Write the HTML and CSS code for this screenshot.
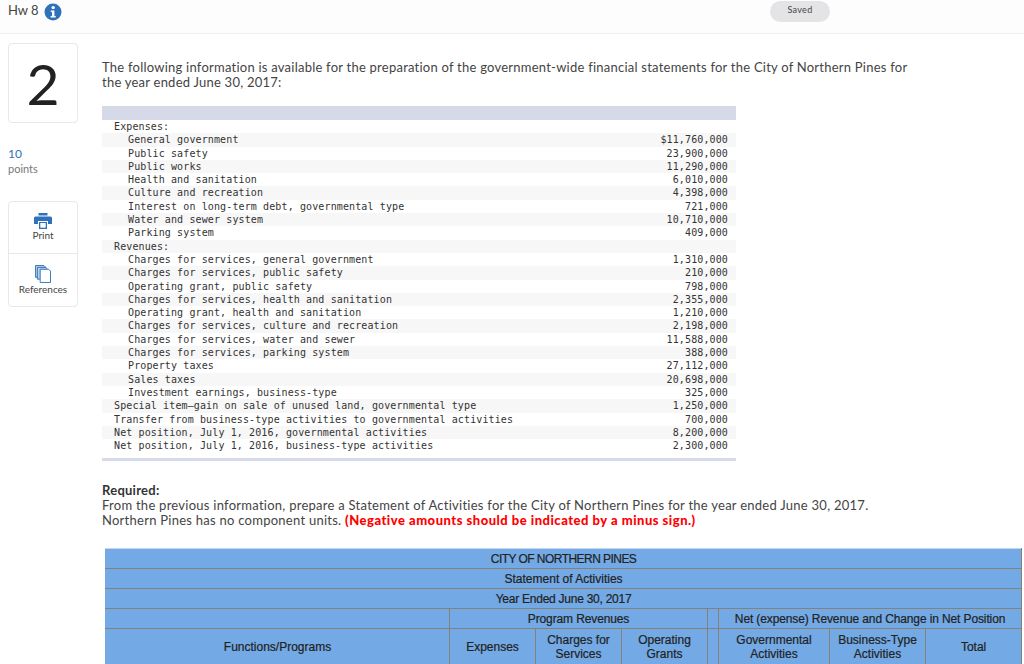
FILE: index.html
```
<!DOCTYPE html>
<html lang="en">
<head>
<meta charset="utf-8">
<title>Hw 8</title>
<link rel="stylesheet" href="styles.css">
</head>
<body>
<header class="topbar">
  <div class="title">
    <span>Hw 8</span>
    <svg class="info" width="18" height="18" viewBox="0 0 18 18"><circle cx="9" cy="9" r="8.5" fill="#2f72bb"/><circle cx="9.2" cy="4.6" r="1.7" fill="#fff"/><path d="M6.800 7.400h3.600v5.600h1.300v1.600H6.600V13h1.400V9H6.800z" fill="#fff"/></svg>
  </div>
  <div class="saved">Saved</div>
</header>
<div class="page">
  <aside class="side">
    <div class="qnum">2</div>
    <div class="points"><div class="pnum">10</div><div class="plabel">points</div></div>
    <div class="tools">
      <div class="tool print">
        <svg width="18" height="16" viewBox="0 0 18 16"><path d="M4.500 0h9v2.500h-9z" fill="#2f72bb"/><path d="M1.500 3.500h15A1.500 1.500 0 0 1 18 5v6h-4V8H4v3H0V5a1.500 1.500 0 0 1 1.500-1.500z" fill="#2f72bb"/><path d="M5 9h8v7H5z" fill="#2f72bb"/><path d="M6.300 10h5.400v4.700H6.300z" fill="#fff"/></svg>
        <span>Print</span>
      </div>
      <div class="tool refs">
        <svg width="16" height="18" viewBox="0 0 17 19"><path d="M.5.500h9l1.500 1.500v11H.5z" fill="#b9cfe6" stroke="#2f72bb"/><path d="M2.500 2.500h9l1.500 1.500v11H2.500z" fill="#b9cfe6" stroke="#2f72bb"/><path d="M5.500 4.500h9l2 2v12h-11z" fill="#fff" stroke="#2f72bb"/></svg>
        <span>References</span>
      </div>
    </div>
  </aside>
  <main class="content">
    <p class="intro">The following information is available for the preparation of the government-wide financial statements for the City of Northern Pines for the year ended June 30, 2017:</p>
    <div class="exhibit">
      <div class="row"><span class="l0">Expenses:</span><span></span></div>
      <div class="row alt"><span class="l1">General government</span><span>$11,760,000</span></div>
      <div class="row"><span class="l1">Public safety</span><span>23,900,000</span></div>
      <div class="row alt"><span class="l1">Public works</span><span>11,290,000</span></div>
      <div class="row"><span class="l1">Health and sanitation</span><span>6,010,000</span></div>
      <div class="row alt"><span class="l1">Culture and recreation</span><span>4,398,000</span></div>
      <div class="row"><span class="l1">Interest on long-term debt, governmental type</span><span>721,000</span></div>
      <div class="row alt"><span class="l1">Water and sewer system</span><span>10,710,000</span></div>
      <div class="row"><span class="l1">Parking system</span><span>409,000</span></div>
      <div class="row alt"><span class="l0">Revenues:</span><span></span></div>
      <div class="row"><span class="l1">Charges for services, general government</span><span>1,310,000</span></div>
      <div class="row alt"><span class="l1">Charges for services, public safety</span><span>210,000</span></div>
      <div class="row"><span class="l1">Operating grant, public safety</span><span>798,000</span></div>
      <div class="row alt"><span class="l1">Charges for services, health and sanitation</span><span>2,355,000</span></div>
      <div class="row"><span class="l1">Operating grant, health and sanitation</span><span>1,210,000</span></div>
      <div class="row alt"><span class="l1">Charges for services, culture and recreation</span><span>2,198,000</span></div>
      <div class="row"><span class="l1">Charges for services, water and sewer</span><span>11,588,000</span></div>
      <div class="row alt"><span class="l1">Charges for services, parking system</span><span>388,000</span></div>
      <div class="row"><span class="l1">Property taxes</span><span>27,112,000</span></div>
      <div class="row alt"><span class="l1">Sales taxes</span><span>20,698,000</span></div>
      <div class="row"><span class="l1">Investment earnings, business-type</span><span>325,000</span></div>
      <div class="row alt"><span class="l0">Special item—gain on sale of unused land, governmental type</span><span>1,250,000</span></div>
      <div class="row"><span class="l0">Transfer from business-type activities to governmental activities</span><span>700,000</span></div>
      <div class="row alt"><span class="l0">Net position, July 1, 2016, governmental activities</span><span>8,200,000</span></div>
      <div class="row"><span class="l0">Net position, July 1, 2016, business-type activities</span><span>2,300,000</span></div>
    </div>
    <div class="required">
      <strong>Required:</strong>
      <p>From the previous information, prepare a Statement of Activities for the City of Northern Pines for the year ended June 30, 2017. Northern Pines has no component units. <b class="warn">(Negative amounts should be indicated by a minus sign.)</b></p>
    </div>
    <table class="stmt">
      <colgroup><col class="c1"><col class="c2"><col class="c3"><col class="c4"><col class="c5"><col class="c6"><col class="c7"><col class="c8"></colgroup>
      <tr class="caps"><td colspan="8">CITY OF NORTHERN PINES</td></tr>
      <tr><td colspan="8">Statement of Activities</td></tr>
      <tr class="year"><td colspan="8">Year Ended June 30, 2017</td></tr>
      <tr class="mid"><td></td><td colspan="3">Program Revenues</td><td></td><td colspan="3">Net (expense) Revenue and Change in Net Position</td></tr>
      <tr class="tall"><td>Functions/Programs</td><td>Expenses</td><td>Charges for<br>Services</td><td>Operating<br>Grants</td><td></td><td>Governmental<br>Activities</td><td>Business-Type<br>Activities</td><td>Total</td></tr>
    </table>
  </main>
</div>
</body>
</html>
```
FILE: styles.css
```
html, body { margin: 0; padding: 0; }
body {
  width: 1024px;
  height: 664px;
  overflow: hidden;
  background: #fff;
  color: #4a4a4a;
  font-family: "Lato", "Liberation Sans", sans-serif;
}
.topbar {
  height: 33px;
  border-bottom: 1px solid #efefef;
  background: #fdfdfd;
  display: flex;
  justify-content: space-between;
  padding: 0 194px 0 8px;
}
.title {
  display: flex;
  align-items: flex-start;
  gap: 5px;
  font-size: 13px;
  line-height: 20px;
  color: #444;
}
.title .info { margin-top: 3px; }
.saved {
  width: 60px;
  height: 21px;
  margin-top: 1px;
  border-radius: 11px;
  background: #e4e3e5;
  text-align: center;
  font-size: 9px;
  letter-spacing: 0.3px;
  line-height: 18px;
  color: #444;
}
.page { display: flex; }
.side { width: 70px; margin-left: 8px; padding-top: 9px; flex: none; }
.qnum {
  box-sizing: border-box;
  height: 80px;
  border: 1px solid #e8e8e8;
  border-radius: 4px;
  text-align: center;
  font-size: 57px;
  line-height: 78px;
  font-weight: 400;
  color: #222;
}
.points { margin-top: 23px; height: 55px; }
.pnum { font-size: 12px; line-height: 16px; color: #2f72bb; }
.plabel { font-size: 11px; line-height: 14px; color: #777; }
.tools {
  box-sizing: border-box;
  height: 106px;
  border: 1px solid #e8e8e8;
  border-radius: 4px;
}
.tool {
  display: flex;
  flex-direction: column;
  align-items: center;
  font-size: 10px;
  color: #444;
}
.tool span { line-height: 12px; }
.print { height: 52px; padding-top: 11px; box-sizing: border-box; border-bottom: 1px solid #e8e8e8; gap: 0; }
.refs { padding-top: 11px; gap: 0; }
.content { margin-left: 24px; width: 922px; flex: none; }
.intro {
  margin: 26px 0 0;
  width: 820px;
  font-size: 13px;
  line-height: 15px;
  letter-spacing: 0.235px;
  color: #444;
}
.exhibit {
  margin-top: 16px;
  width: 634px;
  box-sizing: border-box;
  border-top: 14px solid #d6dae8;
  border-bottom: 3px solid #d6dae8;
  padding-bottom: 6px;
  font-family: "DejaVu Sans Mono", monospace;
  font-size: 10px;
  letter-spacing: 0.12px;
  color: #333;
}
.row {
  display: flex;
  justify-content: space-between;
  height: 13.3px;
  line-height: 13.3px;
  padding-right: 8px;
  white-space: pre;
}
.row.alt { background: #f7f7f7; }
.l0 { padding-left: 12px; }
.l1 { padding-left: 26px; }
.required {
  margin-top: 22px;
  font-size: 13px;
  line-height: 15px;
  letter-spacing: 0.26px;
  color: #444;
}
.required strong { display: block; color: #333; }
.required p { margin: 0; width: 790px; }
.warn { color: #f00; letter-spacing: 0.5px; font-weight: 900; }
.stmt {
  margin: 20px 0 0 3px;
  width: 917px;
  table-layout: fixed;
  border-collapse: collapse;
  background: #73a9e4;
  font-family: "Liberation Sans", Arial, sans-serif;
  font-size: 12px;
  line-height: 14px;
  color: #222;
  text-align: center;
  -webkit-text-stroke: 0.2px #222;
}
.stmt td { border: 1px solid #85807a; padding: 0; height: 19px; }
.stmt td:first-child { border-left-color: #73a9e4; }
.stmt .caps td { border-top-color: #c3d8ef; letter-spacing: -0.55px; }
.stmt .year td { letter-spacing: -0.25px; }
.stmt .mid td { letter-spacing: -0.12px; }
.stmt .tall td { height: 60px; padding-bottom: 23px; box-sizing: border-box; }
.c1 { width: 344px; }
.c2, .c3, .c4 { width: 86px; }
.c5 { width: 11px; }
.c6 { width: 111px; }
.c7 { width: 96px; }
.c8 { width: 96px; }
```
